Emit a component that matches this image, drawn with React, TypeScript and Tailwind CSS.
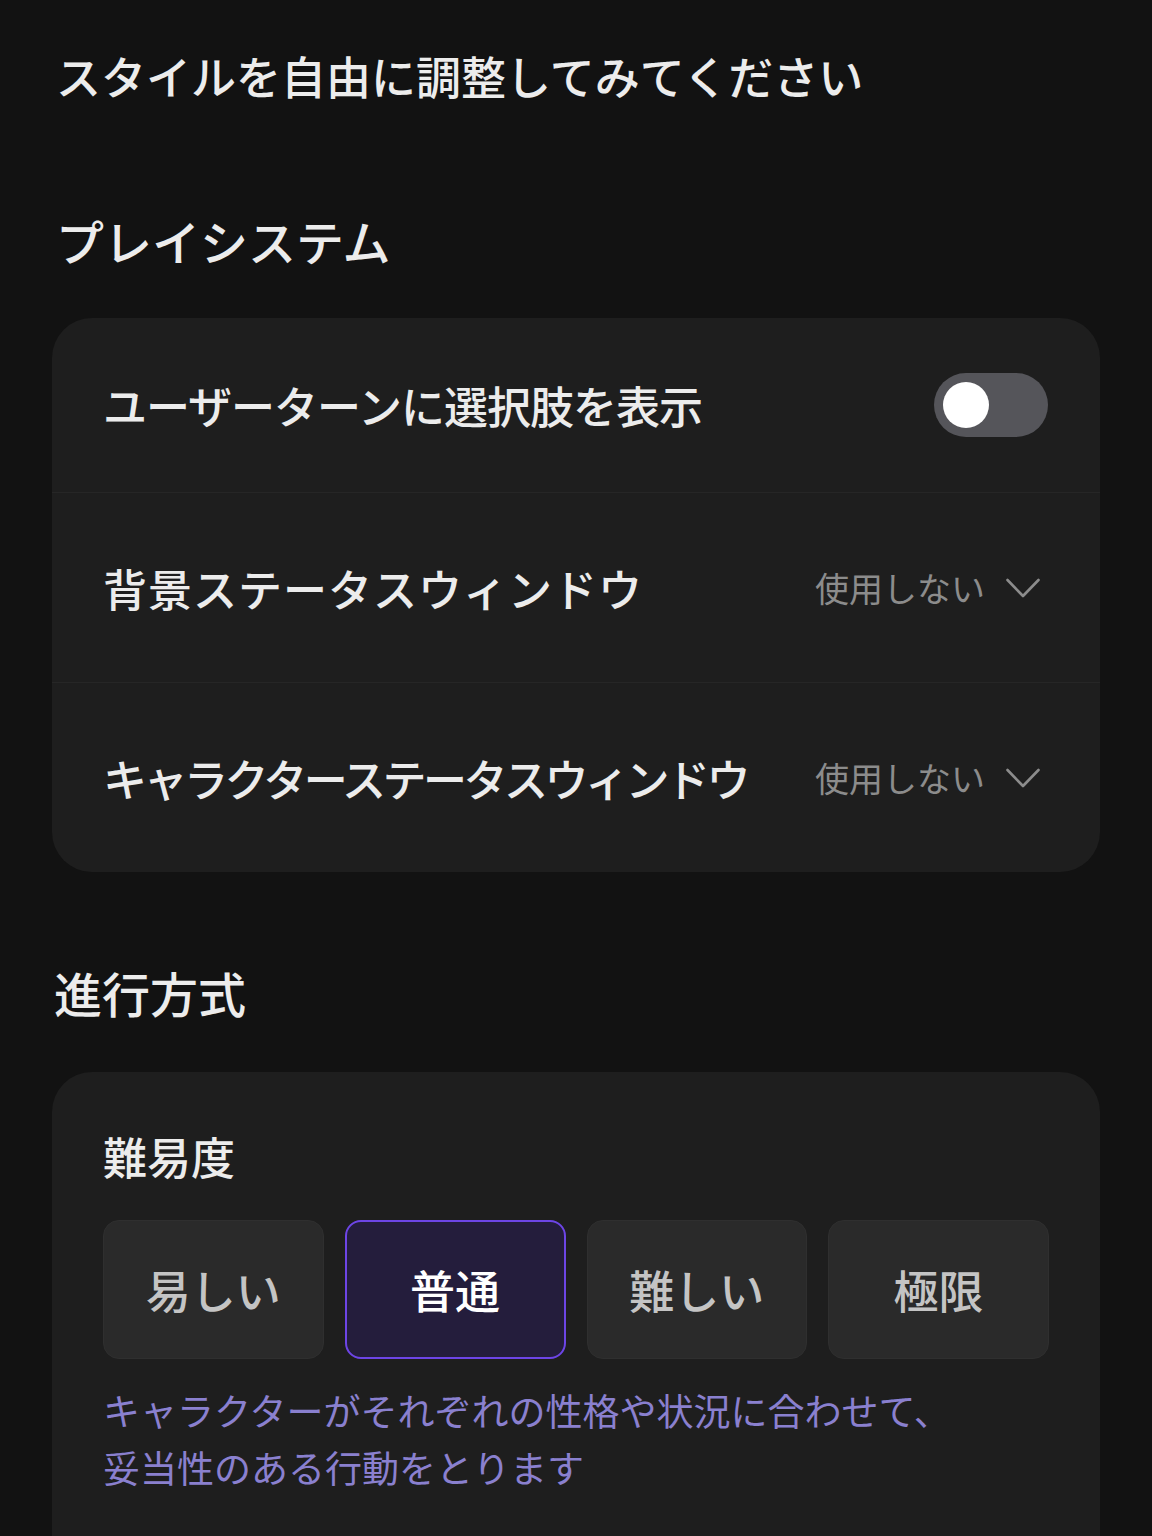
import React, { useState } from 'react';

const font = { fontFamily: '"Noto Sans CJK JP", "Noto Sans", sans-serif' };

function Toggle({ on, onChange }: { on: boolean; onChange: (v: boolean) => void }) {
  return (
    <button
      onClick={() => onChange(!on)}
      className={`flex h-[64px] w-[114px] items-center rounded-full px-[9px] ${on ? 'justify-end bg-[#6b46e0]' : 'justify-start bg-[#55555a]'}`}
    >
      <span className="block h-[46px] w-[46px] rounded-full bg-white" />
    </button>
  );
}

function Chevron() {
  return (
    <svg width="36" height="22" viewBox="0 0 36 22" fill="none" stroke="currentColor" strokeWidth="2.6" strokeLinecap="round" strokeLinejoin="round">
      <path d="M2.5 3 L18 19 L33.5 3" />
    </svg>
  );
}

function SelectRow({ label, value, track }: { label: string; value: string; track: string }) {
  return (
    <div className="flex h-[190px] items-center justify-between border-t border-[#262626] pl-[51px] pr-[59px]">
      <span className={`text-[44px] font-medium text-[#ececec] ${track}`}>{label}</span>
      <span className="flex items-center gap-[20px] text-[34px] text-[#8c8c8c]">
        {value}
        <Chevron />
      </span>
    </div>
  );
}

const levels = ['易しい', '普通', '難しい', '極限'];

export default function App() {
  const [choices, setChoices] = useState(false);
  const [level, setLevel] = useState(1);

  return (
    <div className="min-h-[1536px] bg-[#121212] px-[52px] text-[#ececec]" style={font}>
      <h1 className="pl-[4px] pt-[44px] text-[45px] font-medium leading-[64px] text-[#ececec]">スタイルを自由に調整してみてください</h1>

      <h2 className="mt-[100px] pl-[4px] text-[48px] font-medium leading-[64px]">プレイシステム</h2>
      <div className="mt-[46px] overflow-hidden rounded-[40px] bg-[#1e1e1e]">
        <div className="flex h-[174px] items-center justify-between pl-[51px] pr-[52px]">
          <span className="text-[44px] font-medium tracking-[-1px] text-[#ececec]">ユーザーターンに選択肢を表示</span>
          <Toggle on={choices} onChange={setChoices} />
        </div>
        <SelectRow label="背景ステータスウィンドウ" value="使用しない" track="tracking-[1px]" />
        <SelectRow label="キャラクターステータスウィンドウ" value="使用しない" track="tracking-[-3.5px]" />
      </div>

      <h2 className="mt-[88px] pl-[2px] text-[48px] font-medium leading-[64px]">進行方式</h2>
      <div className="mt-[48px] rounded-t-[40px] bg-[#1e1e1e] px-[51px] pb-[60px] pt-[52px]">
        <div className="text-[44px] font-medium leading-[64px] text-[#ececec]">難易度</div>
        <div className="mt-[32px] grid grid-cols-4 gap-[21px]">
          {levels.map((l, i) => (
            <button
              key={l}
              onClick={() => setLevel(i)}
              className={`flex h-[139px] items-center justify-center rounded-[16px] text-[45px] font-medium ${
                i === level
                  ? 'border-2 border-[#6d45e6] bg-[#241d3c] text-white'
                  : 'border border-[#2f2f2f] bg-[#2a2a2a] text-[#c4c4c4]'
              }`}
            >
              {l}
            </button>
          ))}
        </div>
        <p className="mt-[23px] text-[37px] leading-[57px] text-[#8a80cf]">
          キャラクターがそれぞれの性格や状況に合わせて、
          <br />
          妥当性のある行動をとります
        </p>
      </div>
    </div>
  );
}
